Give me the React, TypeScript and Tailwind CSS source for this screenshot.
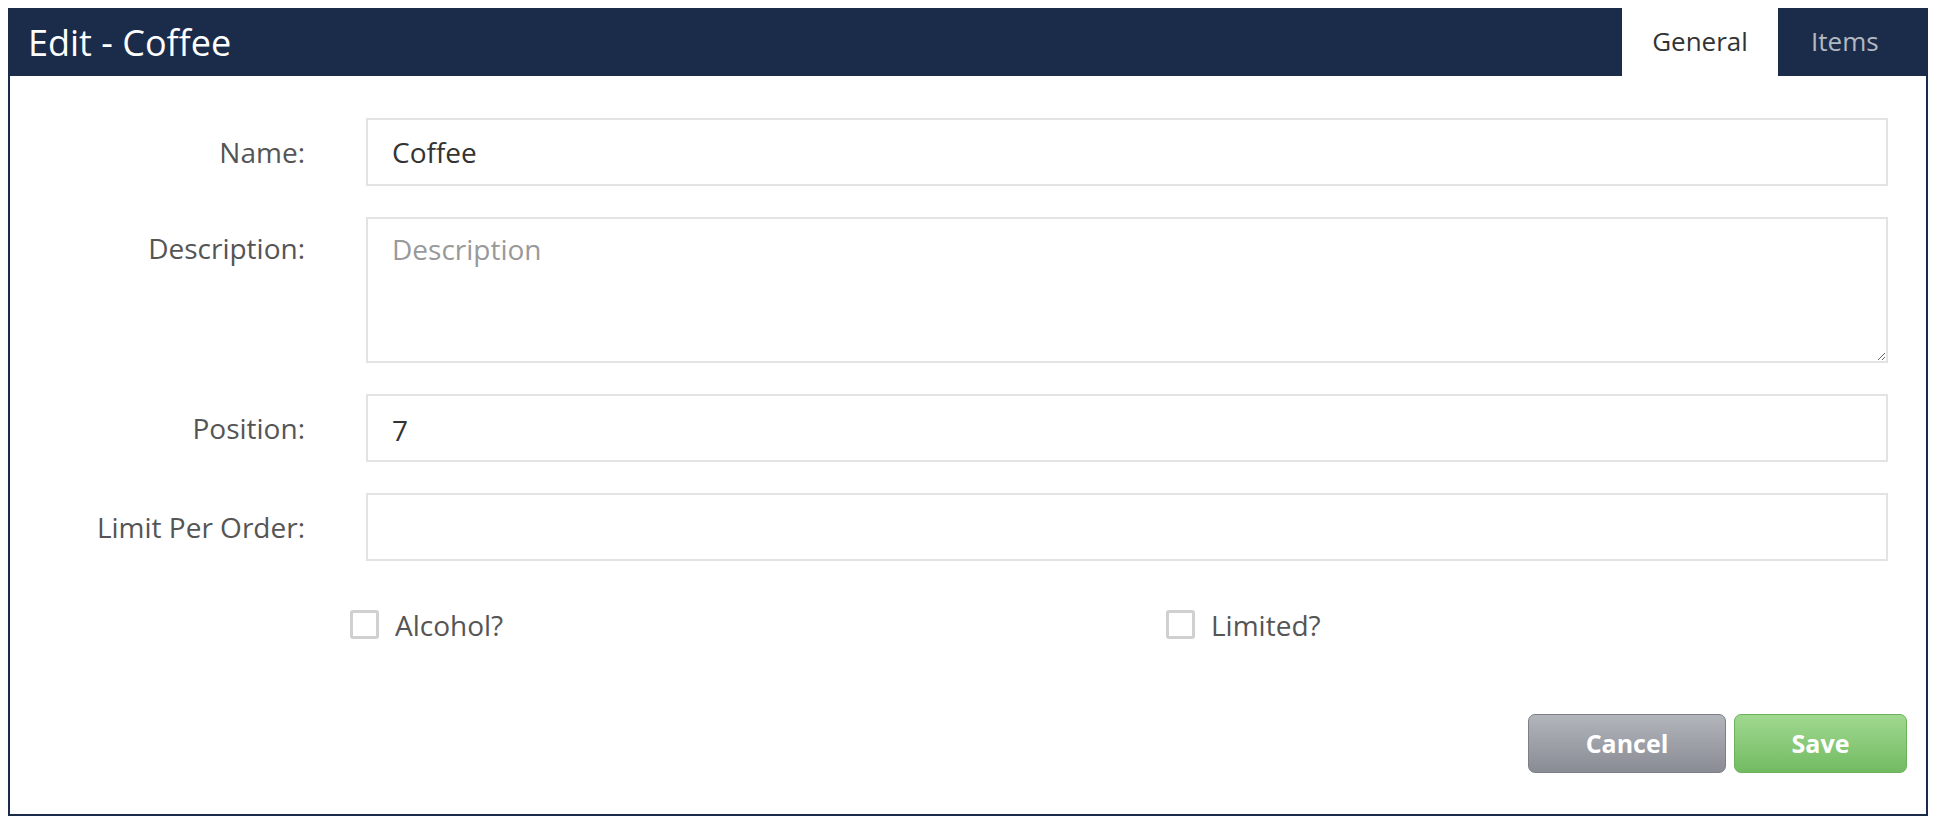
import React from "react";

export default function App() {
  const font = { fontFamily: '"Open Sans", "Noto Sans", sans-serif' };
  return (
    <div className="p-2 bg-white w-[1936px] h-[824px]" style={font}>
      <div className="flex flex-col h-[808px]">
        <div className="h-[68px] bg-[#1b2c4a] flex items-stretch">
          <div className="flex-1 flex items-center pl-[20px] text-white text-[36px] leading-none pt-[1px]">
            Edit - Coffee
          </div>
          <div className="w-[156px] bg-white text-[#333] text-[26px] flex items-center justify-center pb-[2px]">
            General
          </div>
          <div className="w-[150px] text-[#b3b8c1] text-[26px] flex items-center pl-[33px] pb-[2px]">
            Items
          </div>
        </div>
        <div className="flex-1 border-x-2 border-b-2 border-[#1b2c4a] flex flex-col pt-[42px] pr-[38px]">
          <div className="flex items-center h-[68px]">
            <div className="w-[295px] text-right text-[28px] text-[#555]">Name:</div>
            <input
              className="ml-[61px] flex-1 h-[68px] border-2 border-[#e3e3e3] px-[24px] text-[28px] text-[#333] outline-none"
              defaultValue="Coffee"
            />
          </div>
          <div className="flex items-start mt-[31px]">
            <div className="w-[295px] text-right text-[28px] text-[#555] pt-[11px] leading-[40px]">Description:</div>
            <textarea
              className="ml-[61px] flex-1 h-[146px] border-2 border-[#e3e3e3] px-[24px] pt-[10px] text-[28px] leading-[40px] text-[#333] placeholder:text-[#999] outline-none resize"
              placeholder="Description"
            />
          </div>
          <div className="flex items-center h-[68px] mt-[31px]">
            <div className="w-[295px] text-right text-[28px] text-[#555]">Position:</div>
            <input
              className="ml-[61px] flex-1 h-[68px] border-2 border-[#e3e3e3] px-[24px] pt-[3px] text-[28px] text-[#333] outline-none"
              defaultValue="7"
            />
          </div>
          <div className="flex items-center h-[68px] mt-[31px]">
            <div className="w-[295px] text-right text-[28px] text-[#555]">Limit Per Order:</div>
            <input
              className="ml-[61px] flex-1 h-[68px] border-2 border-[#e3e3e3] px-[24px] text-[28px] text-[#333] outline-none"
              defaultValue=""
            />
          </div>
          <div className="flex items-center h-[29px] mt-[49px] pl-[340px]">
            <div className="w-[816px] flex items-center">
              <span className="w-[29px] h-[29px] border-[3px] border-[#d0d0d0] rounded-[3px] bg-white" />
              <span className="ml-[16px] text-[28px] text-[#555]">Alcohol?</span>
            </div>
            <div className="flex items-center">
              <span className="w-[29px] h-[29px] border-[3px] border-[#d0d0d0] rounded-[3px] bg-white" />
              <span className="ml-[16px] text-[28px] text-[#555]">Limited?</span>
            </div>
          </div>
          <div className="flex justify-end mt-[75px] -mr-[19px] gap-[8px]">
            <button className="w-[198px] h-[59px] rounded-[7px] border border-[#7c7f87] bg-gradient-to-b from-[#b2b5ba] to-[#898c94] text-white font-bold text-[25px]">
              Cancel
            </button>
            <button className="w-[173px] h-[59px] rounded-[7px] border border-[#6cb15c] bg-gradient-to-b from-[#a0d890] to-[#72bb62] text-white font-bold text-[25px]">
              Save
            </button>
          </div>
        </div>
      </div>
    </div>
  );
}
